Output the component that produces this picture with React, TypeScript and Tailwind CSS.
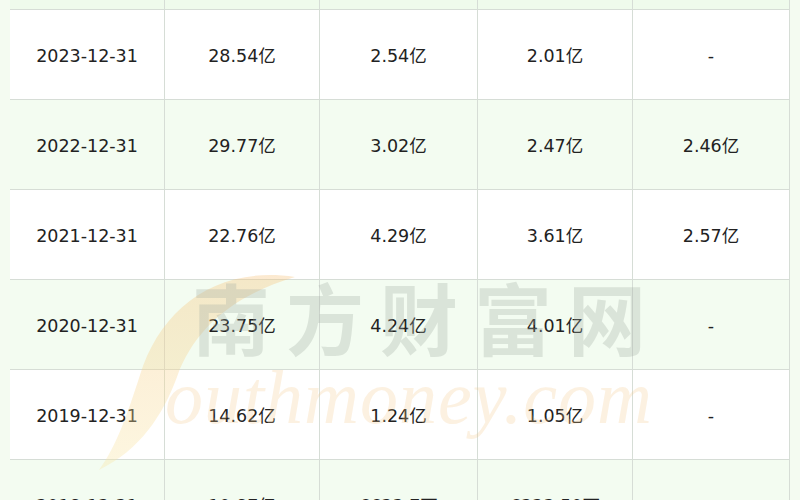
import React from 'react';

const rows = [
  { date: '2023-12-31', a: '28.54亿', b: '2.54亿', c: '2.01亿', d: '-' },
  { date: '2022-12-31', a: '29.77亿', b: '3.02亿', c: '2.47亿', d: '2.46亿' },
  { date: '2021-12-31', a: '22.76亿', b: '4.29亿', c: '3.61亿', d: '2.57亿' },
  { date: '2020-12-31', a: '23.75亿', b: '4.24亿', c: '4.01亿', d: '-' },
  { date: '2019-12-31', a: '14.62亿', b: '1.24亿', c: '1.05亿', d: '-' },
  { date: '2018-12-31', a: '10.87亿', b: '6623.7万', c: '6223.50万', d: '-' },
];

const cols = 'grid grid-cols-[155px_155px_158px_155px_157px]';
const cell = 'flex items-center justify-center pt-[3px] border-r border-[#d6ddd6]';

export default function App() {
  return (
    <div
      className="relative w-[800px] h-[500px] overflow-hidden bg-[#f4fbf1] text-[#222] text-[17.5px]"
      style={{ fontFamily: '"DejaVu Sans", "Noto Sans CJK SC", sans-serif' }}
    >
      <div className="ml-[10px] w-[780px] -mt-[80px]">
        <div className={`${cols} h-[90px] bg-[#effbec] border-b border-[#d6ddd6]`}>
          {[0, 1, 2, 3, 4].map((i) => (
            <div key={i} className={cell} />
          ))}
        </div>
        {rows.map((r, idx) => (
          <div
            key={r.date}
            className={`${cols} h-[90px] border-b border-[#d6ddd6] ${idx % 2 === 0 ? 'bg-white' : 'bg-[#f3fcf1]'}`}
          >
            <div className={cell}>{r.date}</div>
            <div className={cell}>{r.a}</div>
            <div className={cell}>{r.b}</div>
            <div className={cell}>{r.c}</div>
            <div className={cell}>{r.d}</div>
          </div>
        ))}
      </div>

      {/* watermark */}
      <svg className="absolute left-[85px] top-[265px] pointer-events-none" width="220" height="210" viewBox="0 0 220 210">
        <defs>
          <linearGradient id="sw" x1="0" y1="0" x2="0" y2="1">
            <stop offset="0" stopColor="#f6c27a" />
            <stop offset="1" stopColor="#f9e7a6" />
          </linearGradient>
        </defs>
        <path
          d="M210 12 C130 0 75 45 55 110 C42 150 32 180 14 205 C55 185 78 150 92 112 C110 62 150 30 210 12 Z"
          fill="url(#sw)"
          opacity="0.35"
        />
      </svg>
      <div
        className="absolute left-[192px] top-[258px] text-[78px] font-bold tracking-[16px] text-[#a4aea4] opacity-30 pointer-events-none whitespace-nowrap"
        style={{ fontFamily: '"Noto Sans CJK SC", sans-serif' }}
      >
        南方财富网
      </div>
      <div
        className="absolute left-[165px] top-[340px] text-[76px] italic tracking-[1px] text-[#f5c889] opacity-25 pointer-events-none whitespace-nowrap"
        style={{ fontFamily: '"Liberation Serif", serif' }}
      >
        outhmoney.com
      </div>
    </div>
  );
}
